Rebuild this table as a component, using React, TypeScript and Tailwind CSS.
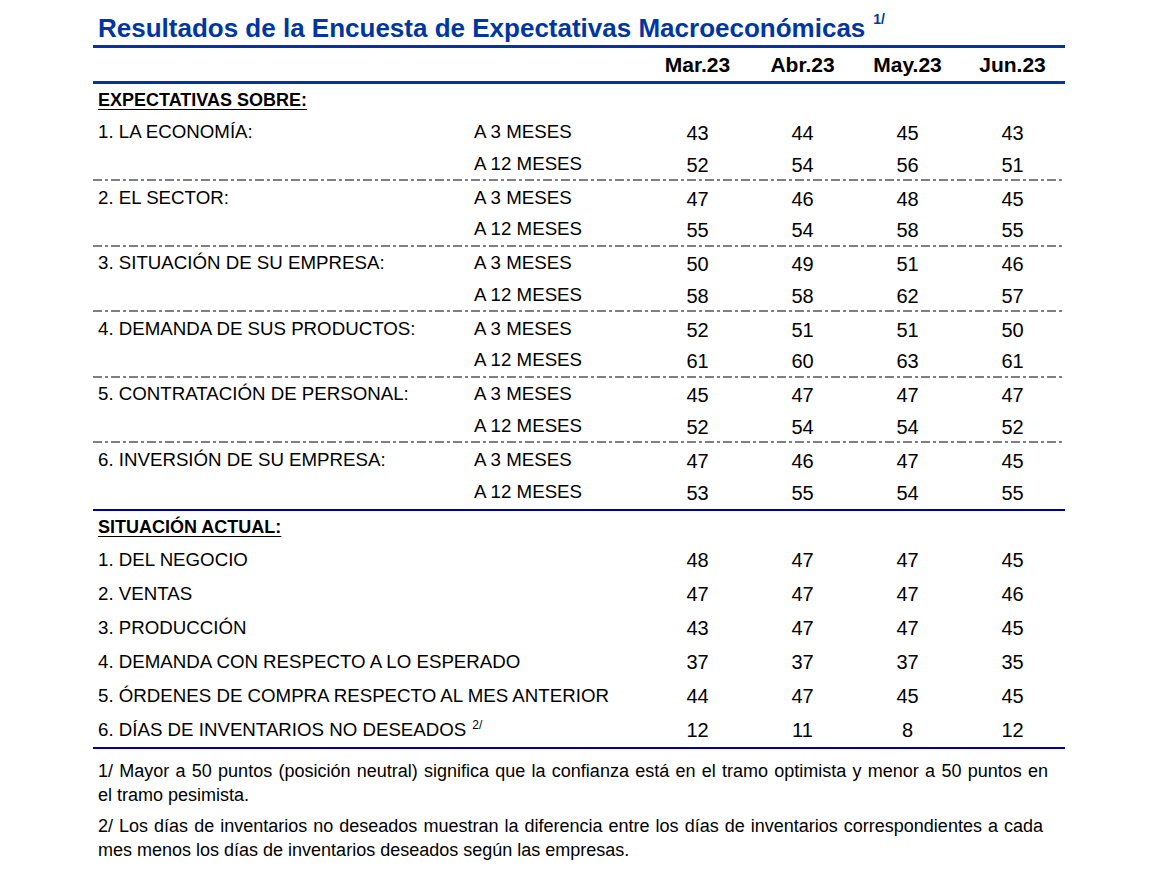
import React from 'react';

type Pair = { label: string; a3: number[]; a12: number[] };

const months = ['Mar.23', 'Abr.23', 'May.23', 'Jun.23'];

const expectativas: Pair[] = [
  { label: '1. LA ECONOMÍA:', a3: [43, 44, 45, 43], a12: [52, 54, 56, 51] },
  { label: '2. EL SECTOR:', a3: [47, 46, 48, 45], a12: [55, 54, 58, 55] },
  { label: '3. SITUACIÓN DE SU EMPRESA:', a3: [50, 49, 51, 46], a12: [58, 58, 62, 57] },
  { label: '4. DEMANDA DE SUS PRODUCTOS:', a3: [52, 51, 51, 50], a12: [61, 60, 63, 61] },
  { label: '5. CONTRATACIÓN DE PERSONAL:', a3: [45, 47, 47, 47], a12: [52, 54, 54, 52] },
  { label: '6. INVERSIÓN DE SU EMPRESA:', a3: [47, 46, 47, 45], a12: [53, 55, 54, 55] },
];

const actual = [
  { label: '1. DEL NEGOCIO', v: [48, 47, 47, 45] },
  { label: '2. VENTAS', v: [47, 47, 47, 46] },
  { label: '3. PRODUCCIÓN', v: [43, 47, 47, 45] },
  { label: '4. DEMANDA CON RESPECTO A LO ESPERADO', v: [37, 37, 37, 35] },
  { label: '5. ÓRDENES DE COMPRA RESPECTO AL MES ANTERIOR', v: [44, 47, 45, 45] },
  { label: '6. DÍAS DE INVENTARIOS NO DESEADOS', v: [12, 11, 8, 12], note: '2/' },
];

const grid = 'grid grid-cols-[377px_175px_105px_105px_105px_105px] items-center';

function Nums({ values, lift }: { values: number[]; lift?: boolean }) {
  return (
    <>
      {values.map((n, i) => (
        <div key={i} className={`text-center text-[20px] leading-none ${lift ? '' : 'pt-[2px]'}`}>
          {n}
        </div>
      ))}
    </>
  );
}

export default function App() {
  return (
    <div className="min-h-screen w-full bg-white text-black font-['Liberation_Sans',Arial,sans-serif]">
      <div className="w-[972px] ml-[93px]">
        {/* Title */}
        <div className="h-[45px] flex items-end pl-[5px] pb-[4px]">
          <h1 className="text-[26px] leading-none font-bold text-[#0036a0] whitespace-nowrap">
            Resultados de la Encuesta de Expectativas Macroeconómicas
            <span className="text-[14px] ml-[8px] relative -top-[13px]">1/</span>
          </h1>
        </div>
        <div className="h-[3px] bg-[#0036a0]" />

        {/* Header */}
        <div className={`${grid} h-[33px]`}>
          <div />
          <div />
          {months.map((m) => (
            <div key={m} className="text-center text-[21px] font-bold leading-none">
              {m}
            </div>
          ))}
        </div>
        <div className="h-[3px] bg-[#0036a0]" />

        {/* Expectativas */}
        <div className="h-[32px] flex items-center pl-[5px]">
          <span className="text-[18px] font-bold underline underline-offset-[3px] leading-none">
            EXPECTATIVAS SOBRE:
          </span>
        </div>
        {expectativas.map((g, gi) => (
          <div key={g.label} className="h-[65.5px] flex flex-col">
            <div className={`${grid} h-[33px]`}>
              <div className="pl-[5px] pt-[1px] text-[18.7px] leading-none">{g.label}</div>
              <div className="pl-[4px] pt-[1px] text-[18.7px] leading-none">A 3 MESES</div>
              <Nums values={g.a3} />
            </div>
            <div className={`${grid} h-[31px]`}>
              <div />
              <div className="pl-[4px] pt-[1px] text-[18.7px] leading-none">A 12 MESES</div>
              <Nums values={g.a12} />
            </div>
            {gi < expectativas.length - 1 && (
              <div className="h-[2px] mt-auto mb-[0.5px] bg-[repeating-linear-gradient(90deg,#7f7f7f_0_9px,transparent_9px_12px,#7f7f7f_12px_15px,transparent_15px_18px)]" />
            )}
          </div>
        ))}
        <div className="h-[2px] bg-[#000099]" />

        {/* Situación actual */}
        <div className="h-[32px] flex items-center pl-[5px]">
          <span className="text-[18px] font-bold underline underline-offset-[3px] leading-none">
            SITUACIÓN ACTUAL:
          </span>
        </div>
        {actual.map((r) => (
          <div key={r.label} className={`${grid} h-[34px]`}>
            <div className="col-span-2 pl-[5px] text-[18.7px] leading-none whitespace-nowrap">
              {r.label}
              {r.note && <span className="text-[12px] ml-[6px] relative -top-[7px]">{r.note}</span>}
            </div>
            <Nums values={r.v} lift />
          </div>
        ))}
        <div className="h-[2px] bg-[#000099]" />

        {/* Footnotes */}
        <div className="pl-[5px] w-[955px] text-[18px] leading-[24px] pt-[10px]">
          <p className="text-justify [text-align-last:justify]">
            1/ Mayor a 50 puntos (posición neutral) significa que la confianza está en el tramo optimista y menor a 50 puntos en
          </p>
          <p>el tramo pesimista.</p>
          <p className="mt-[7px] text-justify [text-align-last:justify] w-[945px]">
            2/ Los días de inventarios no deseados muestran la diferencia entre los días de inventarios correspondientes a cada
          </p>
          <p>mes menos los días de inventarios deseados según las empresas.</p>
        </div>
      </div>
    </div>
  );
}
